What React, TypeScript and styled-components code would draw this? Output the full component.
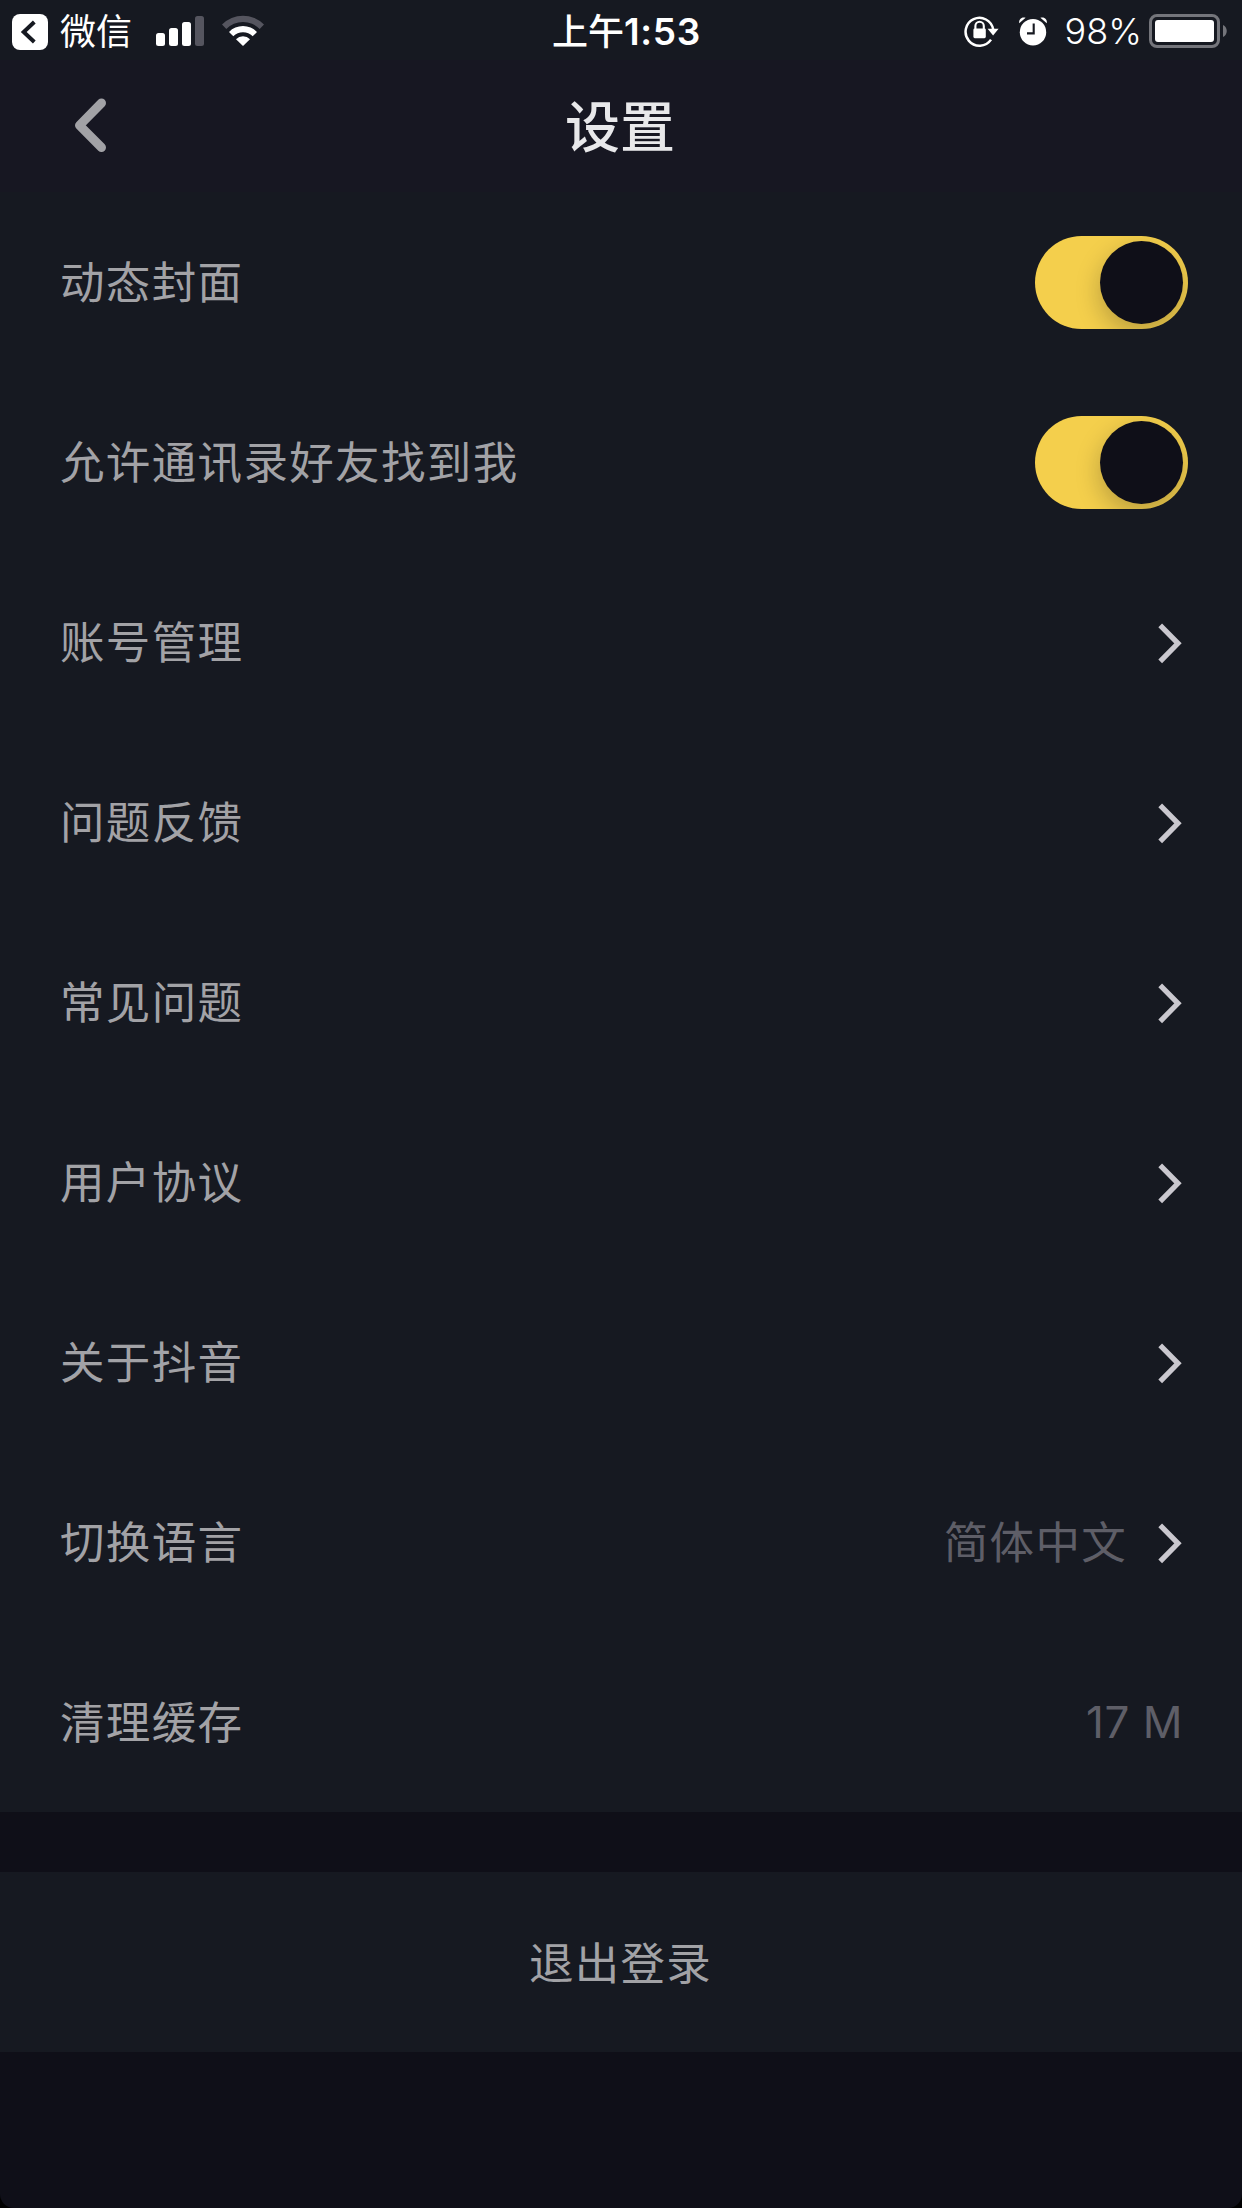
import React from "react";
import styled, { createGlobalStyle } from "styled-components";

const Global = createGlobalStyle`
  html, body { margin: 0; padding: 0; background: #000; }
  * { box-sizing: border-box; }
`;

const Screen = styled.div`
  display: flex;
  flex-direction: column;
  width: 1242px;
  height: 2208px;
  overflow: hidden;
  background: #0f0f18;
  border-radius: 0 0 14px 14px;
  font-family: Inter, "Noto Sans CJK SC", sans-serif;
  font-weight: 400;
`;

const StatusBar = styled.div`
  display: grid;
  grid-template-columns: 1fr auto 1fr;
  height: 60px;
  background: #161921;
  color: #fff;
`;

const StatusGroup = styled.div<{ $end?: boolean }>`
  display: flex;
  align-items: center;
  justify-content: ${(p) => (p.$end ? "flex-end" : "flex-start")};
  padding: ${(p) => (p.$end ? "0 15px 0 0" : "0 0 0 12px")};
  svg { display: block; flex: none; }
`;

const BackApp = styled.span`
  margin: 0 24px 0 12px;
  padding-top: 1px;
  font-size: 36px;
  line-height: 60px;
  height: 60px;
`;

const Clock = styled.span`
  padding: 2px 0 0 11px;
  font-size: 36px;
  font-weight: 500;
  line-height: 60px;
  height: 60px;
`;

const Digits = styled.span`
  font-size: 37px;
  font-weight: 600;
  letter-spacing: 0.7px;
`;

const Percent = styled.span`
  margin: 0 7px 0 17px;
  padding-top: 1px;
  font-size: 36px;
  font-weight: 350;
  line-height: 60px;
`;

const Header = styled.header`
  display: grid;
  grid-template-columns: 180px 1fr 180px;
  align-items: center;
  height: 132px;
  background: #171722;
`;

const BackButton = styled.button`
  display: flex;
  margin: 0;
  padding: 0 0 0 72px;
  border: 0;
  background: none;
`;

const Title = styled.h1`
  margin: 0;
  padding: 1px 2px 0 0;
  text-align: center;
  font-size: 55px;
  font-weight: 500;
  line-height: 132px;
  height: 132px;
  color: #e8e8ea;
`;

const List = styled.ul`
  margin: 0;
  padding: 0;
  list-style: none;
  background: #161921;
`;

const Row = styled.li`
  display: flex;
  align-items: center;
  height: 180px;
  padding: 0 54px 0 60px;
`;

const Label = styled.span`
  flex: 1;
  padding-top: 2px;
  font-size: 44.5px;
  letter-spacing: 1.35px;
  line-height: 60px;
  color: #a2a2a6;
`;

const Value = styled.span<{ $last?: boolean }>`
  margin-right: ${(p) => (p.$last ? 5 : 28)}px;
  padding-top: ${(p) => (p.$last ? 0 : 2)}px;
  font-size: ${(p) => (p.$last ? 44 : 44.5)}px;
  letter-spacing: ${(p) => (p.$last ? 0.5 : 1.3)}px;
  line-height: 60px;
  color: #5e5e67;
`;

const Track = styled.span`
  display: flex;
  align-items: center;
  justify-content: flex-end;
  width: 153px;
  height: 93px;
  padding-right: 5px;
  border-radius: 47px;
  overflow: hidden;
  background: #f4cf4c;
`;

const Knob = styled.span`
  width: 83px;
  height: 83px;
  border-radius: 50%;
  background: #0f0f18;
  box-shadow: 0 9px 24px rgba(15, 15, 24, 0.26);
`;

const Chevron = styled.svg`
  display: block;
  margin-right: 5px;
`;

const Logout = styled.button`
  height: 180px;
  margin: 60px 0 0;
  padding: 0 1px 4px 0;
  border: 0;
  background: #161921;
  color: #a2a2a6;
  font: inherit;
  font-size: 44.5px;
  letter-spacing: 1.3px;
`;

type Item = { label: string; toggle?: boolean; value?: string; link?: boolean };

const items: Item[] = [
  { label: "动态封面", toggle: true },
  { label: "允许通讯录好友找到我", toggle: true },
  { label: "账号管理", link: true },
  { label: "问题反馈", link: true },
  { label: "常见问题", link: true },
  { label: "用户协议", link: true },
  { label: "关于抖音", link: true },
  { label: "切换语言", value: "简体中文", link: true },
  { label: "清理缓存", value: "17 M" },
];

const Return = styled.svg`
  margin-top: 3px;
`;

const ReturnIcon = () => (
  <Return width="36" height="36" viewBox="0 0 36 36">
    <rect width="36" height="36" rx="8" fill="#fff" />
    <path d="M22.3 8 L11.7 18 L22.3 28" fill="none" stroke="#161921" strokeWidth="4" />
  </Return>
);

const SignalIcon = () => (
  <svg width="48" height="32" viewBox="0 0 48 32">
    <rect x="0" y="18" width="9" height="13" rx="2.5" fill="#fff" />
    <rect x="13" y="13" width="9" height="18" rx="2.5" fill="#fff" />
    <rect x="26" y="7" width="9" height="24" rx="2.5" fill="#fff" />
    <rect x="39" y="1" width="9" height="30" rx="2.5" fill="#55555f" />
  </svg>
);

const Wifi = styled.svg`
  margin-left: 18px;
`;

const WifiIcon = () => (
  <Wifi width="42" height="32" viewBox="0 0 42 32">
    <path d="M0 9.5 A29.5 29.5 0 0 1 42 9.5 L37.7 14 A23.3 23.3 0 0 0 4.3 14 Z" fill="#55555f" />
    <path d="M7 17 A19.5 19.5 0 0 1 35 17 L30.7 21.3 A13.5 13.5 0 0 0 11.3 21.3 Z" fill="#fff" />
    <path d="M14 24.2 A9.8 9.8 0 0 1 28 24.2 L21 31 Z" fill="#fff" />
  </Wifi>
);

const LockIcon = () => (
  <svg width="36" height="32" viewBox="0 0 36 32">
    <path d="M27 24.6 A13.9 13.9 0 1 1 29.2 14.5" fill="none" stroke="#fff" strokeWidth="2.5" />
    <path d="M23.6 13.8 H34.6 L29.1 20.4 Z" fill="#fff" />
    <rect x="9.4" y="13.4" width="12.4" height="9.8" rx="1.4" fill="#fff" />
    <path d="M11.4 14.6 V11 A4.2 4.2 0 0 1 19.8 11 V14.6" fill="none" stroke="#fff" strokeWidth="2.1" />
  </svg>
);

const Alarm = styled.svg`
  margin-left: 18px;
`;

const AlarmIcon = () => (
  <Alarm width="30" height="32" viewBox="0 0 30 32">
    <circle cx="15" cy="17.2" r="13.2" fill="#fff" />
    <path d="M1.2 8.2 C0.6 4.6 3.6 1.4 7.6 2.8 Z" fill="#fff" />
    <path d="M28.8 8.2 C29.4 4.6 26.4 1.4 22.4 2.8 Z" fill="#fff" />
    <path d="M15.7 8.4 V18.4 H9" fill="none" stroke="#161921" strokeWidth="2.1" />
  </Alarm>
);

const BatteryIcon = () => (
  <svg width="78" height="34" viewBox="0 0 78 34">
    <rect x="1.5" y="1.5" width="68" height="31" rx="6.5" fill="none" stroke="#74757b" strokeWidth="3" />
    <rect x="6" y="6" width="59" height="22" rx="3" fill="#fff" />
    <path d="M74 11 C79 13 79 21 74 23 Z" fill="#74757b" />
  </svg>
);

export default function App() {
  return (
    <>
      <Global />
      <Screen>
        <StatusBar>
          <StatusGroup>
            <ReturnIcon />
            <BackApp>微信</BackApp>
            <SignalIcon />
            <WifiIcon />
          </StatusGroup>
          <Clock>
            上午<Digits>1:53</Digits>
          </Clock>
          <StatusGroup $end>
            <LockIcon />
            <AlarmIcon />
            <Percent>98%</Percent>
            <BatteryIcon />
          </StatusGroup>
        </StatusBar>
        <Header>
          <BackButton>
            <svg width="40" height="60" viewBox="0 0 40 60">
              <path
                d="M29.5 7 L7.5 29.3 L29.5 51.5"
                fill="none"
                stroke="#a2a2a6"
                strokeWidth="9"
                strokeLinecap="round"
                strokeLinejoin="round"
              />
            </svg>
          </BackButton>
          <Title>设置</Title>
        </Header>
        <List>
          {items.map((item) => (
            <Row key={item.label}>
              <Label>{item.label}</Label>
              {item.value && <Value $last={!item.link}>{item.value}</Value>}
              {item.toggle && (
                <Track>
                  <Knob />
                </Track>
              )}
              {item.link && (
                <Chevron width="28" height="44" viewBox="0 0 28 44">
                  <path d="M5.2 5.3 L23 23.3 L5.2 41.3" fill="none" stroke="#cac8cf" strokeWidth="5.2" />
                </Chevron>
              )}
            </Row>
          ))}
        </List>
        <Logout>退出登录</Logout>
      </Screen>
    </>
  );
}
